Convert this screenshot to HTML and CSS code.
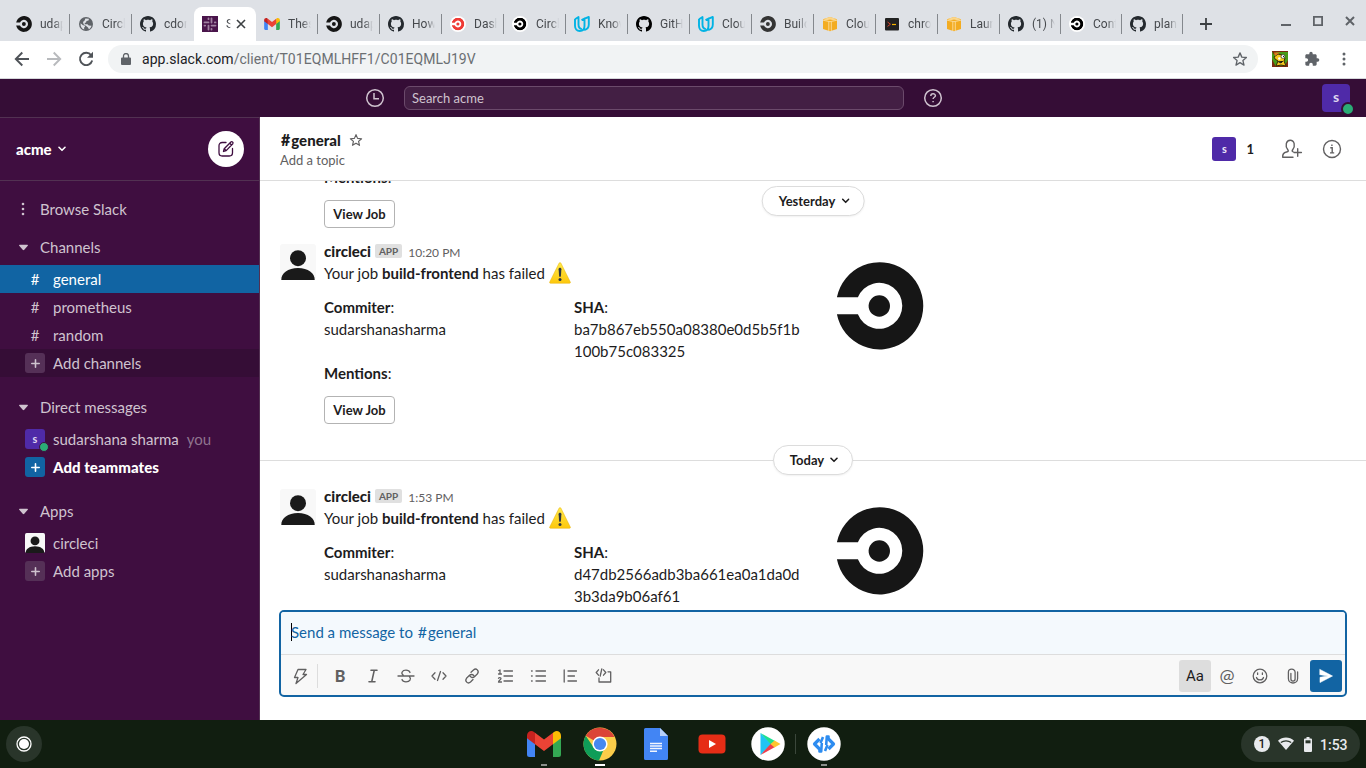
FILE: index.html
```html
<!DOCTYPE html>
<html lang="en">
<head>
<meta charset="utf-8">
<title>general | acme Slack</title>
<link rel="stylesheet" href="styles.css">
</head>
<body>
<svg class="defs" width="0" height="0">
  <defs>
    <symbol id="circle" viewBox="0 0 88 88">
      <path fill="currentColor" d="M.9 35.300A43.600 43.600 0 1 1 .9 52.300H21.900A23 23 0 1 0 21.900 35.300Z"/>
      <circle cx="43.300" cy="44" r="10.700" fill="currentColor"/>
    </symbol>
    <symbol id="github" viewBox="0 0 16 16"><path fill="currentColor" d="M8 0C3.58 0 0 3.58 0 8c0 3.54 2.29 6.53 5.47 7.59.4.07.55-.17.55-.38 0-.19-.01-.82-.01-1.49-2.01.37-2.53-.49-2.69-.94-.09-.23-.48-.94-.82-1.13-.28-.15-.68-.52-.01-.53.63-.01 1.08.58 1.23.82.72 1.21 1.87.87 2.33.66.07-.52.28-.87.51-1.07-1.78-.2-3.64-.89-3.64-3.95 0-.87.31-1.59.82-2.15-.08-.2-.36-1.02.08-2.12 0 0 .67-.21 2.2.82.64-.18 1.32-.27 2-.27s1.36.09 2 .27c1.53-1.04 2.2-.82 2.2-.82.44 1.1.16 1.92.08 2.12.51.56.82 1.27.82 2.15 0 3.07-1.87 3.75-3.65 3.95.29.25.54.73.54 1.48 0 1.07-.01 1.93-.01 2.2 0 .21.15.46.55.38A8.01 8.01 0 0 0 16 8c0-4.42-3.58-8-8-8z"/></symbol>
    <symbol id="globe" viewBox="0 0 16 16"><circle cx="8" cy="8" r="7" fill="#5f6368"/><path fill="#dee1e6" d="M2.600 7.200 5 9.300l1.800.3.2 1.200-1 1 .3 1.800C3.600 12.900 2.200 10.300 2.600 7.200ZM7.400 2.500l3.600.3-.5 1.600-2 .6-.5 1.600-1.400.3.400 1.300h2.500l1.200 1.400 2.800.2c-.5 1.800-1.500 2.900-2.600 3.500L10 11.500 8.200 10 5.600 8.200 5 6l1.600-1.500Z"/></symbol>
    <symbol id="gmail" viewBox="0 0 34 26">
      <path fill="#4285f4" d="M0 6h8v20H2.500A2.500 2.500 0 0 1 0 23.500Z"/><path fill="#34a853" d="M26 6h8v17.500a2.500 2.500 0 0 1-2.500 2.500H26Z"/>
      <path fill="#c5221f" d="M0 7V4.500C0 .8 4-1.200 7 .9L8 1.700v11.500L0 7.300Z"/><path fill="#fbbc04" d="M34 7V4.500C34 .8 30-1.200 27 .9l-1 .8v11.500l8-5.900Z"/>
      <path fill="#ea4335" d="M8 1.700 17 8.400l9-6.700v11.500L17 20l-9-6.800Z"/>
    </symbol>
    <symbol id="udacity" viewBox="0 0 16 16"><path fill="none" stroke="#02b3e4" stroke-width="1.900" stroke-linejoin="round" d="M1 3.200 4.500 1v7.500c0 2.600 1.200 4.200 3.300 4.700M1 3v6.800c0 3.500 2 5.200 4.700 5.200 2.800 0 4.800-1.700 4.800-5V2.600L14.800 1v7.500c0 3-1.600 4.900-4.500 5.500M7.500 4.200l3-1.600v6.200"/></symbol>
    <symbol id="aws" viewBox="0 0 16 16"><path fill="#f3ac22" d="M1 3.300 8 1l7 2.300v9.800L8 15.300l-7-2.200Z"/><path fill="#fbd68c" d="M1 3.300 8 1l7 2.300-3.700 1L8 3.600l-3.300.7Z"/><path fill="none" stroke="#fce3ad" stroke-width=".8" d="m1 4.200 7 1.500 7-1.500M6.800 5.600V15m2.500-9.300V15"/></symbol>
    <symbol id="star" viewBox="0 0 24 24"><path fill="none" stroke="currentColor" stroke-width="2" stroke-linejoin="round" d="m12 2.800 2.700 6.400 6.900.6-5.200 4.500 1.600 6.800-6-3.600-6 3.600 1.600-6.800-5.200-4.500 6.900-.6Z"/></symbol>
    <symbol id="chev" viewBox="0 0 8 6"><path fill="none" stroke="currentColor" stroke-width="1.600" stroke-linecap="round" stroke-linejoin="round" d="m1 1.300 3 3 3-3"/></symbol>
    <symbol id="tri" viewBox="0 0 8 6"><path fill="currentColor" d="M.6.5h6.800c.6 0 .7.500.4.900L4.700 5.100c-.4.500-1 .5-1.400 0L.2 1.400C-.1 1 0 .5.6.5Z"/></symbol>
    <symbol id="plus" viewBox="0 0 8 8"><path stroke="currentColor" stroke-width="1.400" stroke-linecap="round" d="M4 .7v6.600M.7 4h6.600"/></symbol>
    <symbol id="person" viewBox="0 0 36 36"><rect width="36" height="36" rx="3" fill="#f8f8f8"/><circle cx="18" cy="14.200" r="8" fill="#1a1a1a"/><path fill="#1a1a1a" d="M1.300 36C1 29 8 24 18 24s17 5 16.700 12Z"/></symbol>
    <symbol id="warn" viewBox="0 0 22 22"><defs><linearGradient id="wg" x2="0" y2="1"><stop stop-color="#ffe94a"/><stop offset="1" stop-color="#fdc70c"/></linearGradient></defs><path fill="url(#wg)" stroke="#e8b20b" stroke-width=".5" d="M10 1.300q1-1.600 2 0L21.300 20q.4 1.300-.8 1.300H1.500Q.3 21.300.7 20Z"/><path fill="#2f3640" d="M9.600 7.300c0-2 2.800-2 2.800 0l-.5 6.700c-.1 1.300-1.700 1.300-1.800 0Z"/><circle cx="11" cy="17.400" r="1.500" fill="#2f3640"/></symbol>
  </defs>
</svg>

<div class="screen">
  <div class="tabstrip">
    <div class="tab"><svg class="fav dark"><use href="#circle"/></svg><span class="tab-title">udapeople</span></div>
    <div class="tab"><svg class="fav"><use href="#globe"/></svg><span class="tab-title">CircleCI</span></div>
    <div class="tab nosep"><svg class="fav gh"><use href="#github"/></svg><span class="tab-title">cdond-c3</span></div>
    <div class="tab active">
      <svg class="fav" viewBox="0 0 16 16"><path fill="#4a154b" d="M0 0h16v16H0Z"/><path fill="none" stroke="#a081a1" stroke-width="1.800" stroke-linecap="round" d="M6.500 2.500v.7M2.500 6.400h4M9.500 2.500v4M12.800 6.400h.7M2.500 9.600h.7M6.500 9.600v3.900M9.500 9.600h4M9.500 12.800v.7"/></svg>
      <span class="tab-title short">Slack</span>
      <svg class="tab-close" viewBox="0 0 10 10"><path stroke="#3c4043" stroke-width="1.600" d="m1 1 8 8M9 1 1 9"/></svg>
    </div>
    <div class="tab"><svg class="fav mail"><use href="#gmail"/></svg><span class="tab-title">These are</span></div>
    <div class="tab"><svg class="fav dark"><use href="#circle"/></svg><span class="tab-title">udapeople</span></div>
    <div class="tab"><svg class="fav gh"><use href="#github"/></svg><span class="tab-title">How to</span></div>
    <div class="tab"><svg class="fav round red"><use href="#circle"/></svg><span class="tab-title">Dashboard</span></div>
    <div class="tab"><svg class="fav round"><use href="#circle"/></svg><span class="tab-title">Circle</span></div>
    <div class="tab"><svg class="fav"><use href="#udacity"/></svg><span class="tab-title">Know</span></div>
    <div class="tab"><svg class="fav"><use href="#github"/></svg><span class="tab-title">GitHub</span></div>
    <div class="tab"><svg class="fav"><use href="#udacity"/></svg><span class="tab-title">Cloud</span></div>
    <div class="tab"><svg class="fav grey"><use href="#circle"/></svg><span class="tab-title">Build</span></div>
    <div class="tab"><svg class="fav"><use href="#aws"/></svg><span class="tab-title">Cloud</span></div>
    <div class="tab"><svg class="fav" viewBox="0 0 16 16"><rect x="1" y="2" width="14" height="12.500" rx="1" fill="#222"/><path fill="none" stroke="#d5432c" d="m3.500 6 3 2.200-3 2.200"/><path stroke="#f4b400" stroke-width="1.200" d="M8 8.500h4"/></svg><span class="tab-title">chrome</span></div>
    <div class="tab"><svg class="fav"><use href="#aws"/></svg><span class="tab-title">Launch</span></div>
    <div class="tab slim"><svg class="fav gh"><use href="#github"/></svg><span class="tab-title">(1) New</span></div>
    <div class="tab slim"><svg class="fav round"><use href="#circle"/></svg><span class="tab-title">Configure</span></div>
    <div class="tab slim"><svg class="fav gh"><use href="#github"/></svg><span class="tab-title">planning</span></div>
    <svg class="newtab" viewBox="0 0 12 12"><path stroke="#3c4043" stroke-width="1.800" d="M6 0v12M0 6h12"/></svg>
    <div class="window-buttons">
      <svg width="10" height="14" viewBox="0 0 10 14"><path stroke="#5f6368" stroke-width="2" d="M0 11h10"/></svg>
      <svg width="10" height="10" viewBox="0 0 10 10"><path fill="none" stroke="#5f6368" stroke-width="1.800" d="M.9.9h8.200v8.200H.9Z"/></svg>
      <svg width="10" height="10" viewBox="0 0 10 10"><path stroke="#5f6368" stroke-width="2" d="m1 1 8 8M9 1 1 9"/></svg>
    </div>
  </div>

  <div class="toolbar">
    <svg class="nav-ico" viewBox="0 0 16 16"><path fill="none" stroke="#4f5358" stroke-width="1.900" d="M15 8H2M8.300 1.500 1.800 8l6.500 6.500"/></svg>
    <svg class="nav-ico" viewBox="0 0 16 16"><path fill="none" stroke="#b8babd" stroke-width="1.900" d="M1 8h13M7.700 1.500 14.200 8l-6.500 6.500"/></svg>
    <svg class="nav-ico" viewBox="0 0 16 16"><path fill="none" stroke="#4f5358" stroke-width="1.900" d="M13.200 4.200A6.200 6.200 0 1 0 14.200 9.500"/><path fill="#4f5358" d="M15 .8v6H9Z"/></svg>
    <div class="omnibox">
      <svg width="10" height="13" viewBox="0 0 10 13"><path fill="#5f6368" d="M1 4.500h8a1 1 0 0 1 1 1V11a1 1 0 0 1-1 1H1a1 1 0 0 1-1-1V5.500a1 1 0 0 1 1-1Z"/><path fill="none" stroke="#5f6368" stroke-width="1.300" d="M2.500 5V3a2.500 2.500 0 0 1 5 0v2"/></svg>
      <span class="url"><b>app.slack.com</b>/client/T01EQMLHFF1/C01EQMLJ19V</span>
      <svg class="bookmark" width="16" height="16"><use href="#star"/></svg>
    </div>
    <svg class="ext" viewBox="0 0 16 16"><path fill="#479b17" d="M0 0h16v16H0Z"/><path fill="#7b2b10" d="M0 0h16v1H0ZM0 15h16v1H0ZM0 0h5L2 4Zm0 16V8l4 8ZM16 9v7h-4Z"/><path fill="#f3c61c" stroke="#3a2a05" stroke-width="1" d="M2 6 6 3l4 1 3 3-1 3 2 5-5-1-5 1 2-5-3-2Z"/><circle cx="11" cy="5.500" r="1.900" fill="#fff" stroke="#222" stroke-width=".6"/><circle cx="7.300" cy="7.500" r="1.200" fill="#fff"/><path fill="#e07b1b" d="M2 1.500h6L3 5Z"/><path stroke="#222" d="m6 10.500 3 1.500 2-2M11 5.500h1"/></svg>
    <svg class="puzzle" viewBox="0 0 24 24"><path fill="#5f6368" d="M20.500 11H19V7c0-1.100-.9-2-2-2h-4V3.500a2.500 2.500 0 0 0-5 0V5H4c-1.100 0-2 .9-2 2v3.800h1.500a2.700 2.700 0 0 1 0 5.400H2V20c0 1.100.9 2 2 2h3.800v-1.500a2.700 2.700 0 0 1 5.400 0V22H17c1.100 0 2-.9 2-2v-4h1.500a2.500 2.500 0 0 0 0-5Z"/></svg>
    <svg class="kebab" viewBox="0 0 4 14"><g fill="#5f6368"><circle cx="2" cy="2" r="1.500"/><circle cx="2" cy="7" r="1.500"/><circle cx="2" cy="12" r="1.500"/></g></svg>
  </div>

  <div class="topnav">
    <svg class="ring" viewBox="0 0 20 20"><circle cx="10" cy="10" r="8.300"/><path d="M9 5v5.700h5"/></svg>
    <div class="search">Search acme</div>
    <div class="help"><svg class="ring" viewBox="0 0 20 20"><circle cx="10" cy="10" r="8.300"/><path d="M7.800 8c0-3 4.600-2.800 4.600-.3 0 1.500-2.300 1.600-2.300 3.300M10.100 12.900v1.400"/></svg></div>
    <div class="me">s<i class="presence"></i></div>
  </div>

  <div class="workspace">
    <div class="sidebar">
      <div class="team">
        <span class="team-name">acme</span><svg class="chev"><use href="#chev"/></svg>
        <div class="compose"><svg width="18" height="18" viewBox="0 0 18 18"><g fill="none" stroke="#3f0e40" stroke-width="1.300" stroke-linejoin="round" stroke-linecap="round"><path d="M9 2.500H5.200C3.200 2.500 2 3.700 2 5.700v7.100C2 14.800 3.200 16 5.200 16h7.100c2 0 3.200-1.200 3.200-3.200V8.500"/><path d="m6.500 11.500.7-2.800L13.900 2c1-1 2.800.6 1.900 1.700L9.200 10.600Zm.8-2.700 1.800 1.800M12.700 3.300l1.800 1.700"/></g></svg></div>
      </div>
      <div class="row head browse"><svg class="dots" viewBox="0 0 4 14"><g fill="currentColor"><circle cx="2" cy="2" r="1.300"/><circle cx="2" cy="7" r="1.300"/><circle cx="2" cy="12" r="1.300"/></g></svg><span>Browse Slack</span></div>
      <div class="row head first"><svg class="tri"><use href="#tri"/></svg><span>Channels</span></div>
      <div class="row selected"><span class="slot">#</span><span>general</span></div>
      <div class="row"><span class="slot">#</span><span>prometheus</span></div>
      <div class="row"><span class="slot">#</span><span>random</span></div>
      <div class="row hover"><span class="slot box"><svg class="plus"><use href="#plus"/></svg></span><span>Add channels</span></div>
      <div class="row head"><svg class="tri"><use href="#tri"/></svg><span>Direct messages</span></div>
      <div class="row"><span class="slot box user">s<i class="presence small"></i></span><span>sudarshana sharma</span><span class="you">you</span></div>
      <div class="row strong"><span class="slot box blue"><svg class="plus"><use href="#plus"/></svg></span><span>Add teammates</span></div>
      <div class="row head"><svg class="tri"><use href="#tri"/></svg><span>Apps</span></div>
      <div class="row"><svg class="slot"><use href="#person"/></svg><span>circleci</span></div>
      <div class="row"><span class="slot box"><svg class="plus"><use href="#plus"/></svg></span><span>Add apps</span></div>
    </div>

    <div class="main">
      <div class="channel-head">
        <div class="channel-info">
          <div class="channel-name"><span><span class="hash">#</span>general</span><svg width="14" height="14"><use href="#star"/></svg></div>
          <div class="topic">Add a topic</div>
        </div>
        <div class="member">s</div>
        <div class="count">1</div>
        <svg class="add-user" width="22" height="20" viewBox="0 0 22 20"><g fill="none" stroke="#616061" stroke-width="1.400" stroke-linecap="round" stroke-linejoin="round"><path d="M12 18.300H1.700c-.3-3 .8-4.600 3.800-5.300 2-.5 2.200-1.200 1.300-2.300C3.800 7 5 1.300 9.200 1.300c4.300 0 5.400 5.700 2.500 9.400-.7.900-.8 1.600.2 2M16.700 9.800v7.400M13 13.500h7.400"/></g></svg>
        <svg class="info" width="20" height="20" viewBox="0 0 20 20"><g fill="none" stroke="#616061" stroke-width="1.400"><circle cx="10" cy="10" r="8.500"/><path d="M8.300 8.700h1.900v5M8 13.900h4.200M9.900 5.400v1.500"/></g></svg>
      </div>

      <div class="messages">
        <div class="date-pill floating">Yesterday<svg class="chev"><use href="#chev"/></svg></div>
        <div class="tail">
          <b>Mentions</b>:
          <div><span class="job">View Job</span></div>
        </div>
        <div class="message">
          <svg class="avatar"><use href="#person"/></svg>
          <div class="body">
            <div class="meta"><b>circleci</b><span class="app">APP</span><span class="time">10:20 PM</span></div>
            <div class="text">Your job <b>build-frontend</b> has failed <svg class="emoji"><use href="#warn"/></svg></div>
            <div class="section">
              <div class="fields">
                <div><b>Commiter</b>:<br>sudarshanasharma</div>
                <div><b>SHA</b>:<br>ba7b867eb550a08380e0d5b5f1b<br>100b75c083325</div>
                <div><b>Mentions</b>:</div>
              </div>
              <svg class="logo"><use href="#circle"/></svg>
            </div>
            <span class="job">View Job</span>
          </div>
        </div>
        <div class="day"><div class="date-pill">Today<svg class="chev"><use href="#chev"/></svg></div></div>
        <div class="message">
          <svg class="avatar"><use href="#person"/></svg>
          <div class="body">
            <div class="meta"><b>circleci</b><span class="app">APP</span><span class="time">1:53 PM</span></div>
            <div class="text">Your job <b>build-frontend</b> has failed <svg class="emoji"><use href="#warn"/></svg></div>
            <div class="section">
              <div class="fields">
                <div><b>Commiter</b>:<br>sudarshanasharma</div>
                <div><b>SHA</b>:<br>d47db2566adb3ba661ea0a1da0d<br>3b3da9b06af61</div>
              </div>
              <svg class="logo"><use href="#circle"/></svg>
            </div>
          </div>
        </div>
      </div>

      <div class="composer">
        <div class="input"><i class="caret"></i><span>Send a message to <span class="hash">#</span>general</span></div>
        <div class="format">
          <svg viewBox="0 0 18 18"><path d="M7 2.500h8l-3 5h3.500L5 16.500l2-6H3.500Z"/></svg>
          <i class="bar"></i>
          <span class="glyph bold">B</span>
          <svg viewBox="0 0 18 18"><path stroke-width="1.600" d="M7 3.200h6M5 14.800h6M10.300 3.200 7.700 14.800"/></svg>
          <svg viewBox="0 0 18 18"><path d="M1 9h16M13 5.500C12.500 4 11 3.200 9 3.200c-4 0-5.300 3.300-2.800 4.800M5 12.500c.5 1.500 2 2.300 4 2.300 4 0 5.500-3 3.500-5"/></svg>
          <svg viewBox="0 0 18 18"><path d="M5 5.800 2 9l3 3.200M13 5.800 16 9l-3 3.200M10.500 4.500l-3 9"/></svg>
          <svg viewBox="0 0 18 18"><path d="M8 5.300 10.500 3c2.800-2.500 6 1 4 3.700l-3 3c-1.500 1.300-3.500 1-4.500-.5M10 12.500 7.500 15c-2.800 2.500-6-1-4-3.700l3-3C8 7 10 7.300 11 8.800"/></svg>
          <svg viewBox="0 0 18 18"><path d="M8 4h8.500M8 9h8.500M8 14h8.500M2.700 3.500 4 3v4M2.500 7h3M2.500 11.300c.5-1 2.500-1 2.500.2 0 1.200-2.300 2-2.500 3.500h3"/></svg>
          <svg viewBox="0 0 18 18"><path d="M7 4h9.500M7 9h9.500M7 14h9.500M2.500 4h.7M2.500 9h.7M2.500 14h.7"/></svg>
          <svg viewBox="0 0 18 18"><path d="M2.200 3v12M6 4h8.500M6 9h6.500M6 14h8.500"/></svg>
          <svg viewBox="0 0 18 18"><path d="M3.500 2.800 1.200 5.500l2.300 2.700M8.500 2.800l2.300 2.700-2.300 2.700M6.800 2 5.200 9M4 11v4h11.700V4.800H13"/></svg>
          <span class="spacer"></span>
          <span class="aa">Aa</span>
          <span class="glyph at">@</span>
          <svg class="smile" viewBox="0 0 18 18"><circle cx="9" cy="9" r="6.800"/><path d="M5.500 10.500c1 3.200 6 3.200 7 0M6.600 6v1.400M11.400 6v1.400"/></svg>
          <svg class="clip" viewBox="0 0 18 18"><path d="M6.900 6.500V12c0 2.800 4.200 2.800 4.200 0V5.200c0-4.100-6.700-4-6.700 0V11.500c0 6 9.200 6 9.200 0V5"/></svg>
          <span class="send"><svg viewBox="0 0 18 18"><path class="plane" d="M3 2.500 15.500 9 3 15.500V10.300L11 9 3 7.700Z"/></svg></span>
        </div>
      </div>
    </div>
  </div>

  <div class="shelf">
    <div class="launcher"><svg width="20" height="20" viewBox="0 0 20 20"><circle cx="10" cy="10" r="7" fill="none" stroke="#fff" stroke-width="1.300"/><circle cx="10" cy="10" r="5" fill="#fff"/></svg></div>
    <div class="apps">
      <div class="app-ico running"><svg width="34" height="26"><use href="#gmail"/></svg></div>
      <div class="app-ico running current"><svg width="34" height="34" viewBox="0 0 34 34"><circle cx="17" cy="17" r="16.500" fill="#fbcd4a"/><path fill="#db4437" d="M17 17 2.700 8.700A16.500 16.500 0 0 1 31.300 9.500L31 10H17Z"/><path fill="#0f9d58" d="m2.700 8.700 8.200 12L17 24l-3.500 9.200A16.500 16.500 0 0 1 2.700 8.700Z"/><path fill="#0f9d58" d="m12 22 8.500 1-4.500 10.500-3-.6Z"/><circle cx="17" cy="17" r="7.600" fill="#fff"/><circle cx="17" cy="17" r="6.100" fill="#4688f1"/></svg></div>
      <div class="app-ico"><svg width="24" height="32" viewBox="0 0 24 32"><path fill="#4285f4" d="M1.500 0H16l8 8v22.500a1.500 1.500 0 0 1-1.500 1.500h-21A1.500 1.500 0 0 1 0 30.500v-29A1.500 1.500 0 0 1 1.500 0Z"/><path fill="#b6d0fb" d="m16 0 8 8h-8Z"/><path stroke="#f1f5fe" stroke-width="1.500" d="M6 15.500h12M6 18h12M6 20.500h12M6 23.300h7"/></svg></div>
      <div class="app-ico"><svg width="28" height="20" viewBox="0 0 28 20"><rect x=".5" y=".5" width="27" height="19" rx="4" fill="#e62d16"/><path fill="#fff" d="m11 6 7 4-7 4Z"/></svg></div>
      <div class="app-ico"><svg width="34" height="34" viewBox="0 0 34 34"><circle cx="17" cy="17" r="16.700" fill="#fff"/><path fill="#1fc4f4" d="M9.500 6v22l11-11Z"/><path fill="#1ee08f" d="M9.500 6 24 14l-4 3.500Z"/><path fill="#f03e4d" d="M9.500 28 24 20l-4-3.500Z"/><path fill="#fec62e" d="m23.500 13.500 6 3.500-6 3.500-4-3.500Z"/></svg></div>
      <i class="shelf-sep"></i>
      <div class="app-ico running"><svg width="34" height="34" viewBox="0 0 34 34"><circle cx="17" cy="17" r="16.700" fill="#fff"/><path fill="none" stroke="#2d8cf0" stroke-width="3.200" stroke-linejoin="round" d="m12.500 12-5 5 5 5M21.500 12l5 5-5 5"/><path fill="none" stroke="#2d8cf0" stroke-width="2.600" stroke-linejoin="round" d="M12.500 21v3.500h1.700l.6-8.500M21.500 13V9.500h-1.700l-.6 8.500M13.500 16l2.500-6M20.500 18 18 24"/></svg></div>
    </div>
    <div class="status">
      <span class="badge">1</span>
      <svg width="16" height="14" viewBox="0 0 16 14"><path fill="#e8eaed" d="M0 3.700C4.500-.5 11.500-.5 16 3.700L8 13Z"/><path fill="none" stroke="#29352a" stroke-width="1.200" d="M2.800 5.500c3-2.300 7.400-2.300 10.400 0"/></svg>
      <svg class="battery" width="8" height="15" viewBox="0 0 8 15"><path fill="#e8eaed" d="M2.500 0h3v1.500H7a1 1 0 0 1 1 1V14a1 1 0 0 1-1 1H1a1 1 0 0 1-1-1V2.500a1 1 0 0 1 1-1h1.500Z"/><path fill="#29352a" d="M1.500 3.300h5v3h-5Z"/></svg>
      <span class="clock">1:53</span>
    </div>
  </div>
</div>
</body>
</html>
```
FILE: styles.css
```css
* { box-sizing: border-box; }
body { margin: 0; font-family: Lato, "Liberation Sans", sans-serif; overflow: hidden; }
svg { display: block; flex: none; }
.defs { position: absolute; }
.screen { width: 1366px; height: 768px; display: flex; flex-direction: column; background: #fff; overflow: hidden; }

/* browser tabs */
.tabstrip { height: 41px; flex: none; display: flex; background: #dee1e6; padding: 7px 0 0 8px; font-family: Roboto, sans-serif; font-size: 12px; color: #46494d; }
.tab { width: 62px; height: 34px; flex: none; display: flex; align-items: center; padding: 0 6px 0 8px; background: linear-gradient(#84888d, #84888d) no-repeat right 7px / 1px 20px; }
.tab.slim { width: 61px; }
.tab.nosep { background: none; }
.tab.active { background: #fff; border-radius: 8px 8px 0 0; }
.fav { width: 16px; height: 16px; color: #000; }
.fav.dark { color: #161616; }
.fav.gh { color: #24292e; }
.fav.grey { color: #343434; }
.fav.mail { height: 12px; }
.fav.round { background: #fff; border-radius: 50%; padding: 1.500px; }
.fav.red { color: #ef3b36; }
.tab-title { width: 23px; flex: none; margin-left: 8px; overflow: hidden; white-space: nowrap; line-height: 16px; -webkit-mask-image: linear-gradient(90deg, #000 62%, transparent); mask-image: linear-gradient(90deg, #000 62%, transparent); }
.tab-title.short { width: 5px; }
.tab-close { width: 10px; height: 10px; margin-left: 5px; }
.newtab { width: 12px; height: 12px; margin: 11px 0 0 17px; }
.window-buttons { margin: 7px 11px 0 auto; display: flex; gap: 22px; height: 14px; align-items: center; }

/* address bar */
.toolbar { height: 38px; flex: none; display: flex; align-items: center; padding: 0 20px 1px 14px; border-bottom: 1px solid #d5d7da; font-family: Roboto, sans-serif; }
.nav-ico { width: 16px; height: 16px; margin-right: 16px; }
.omnibox { width: 1150px; height: 28px; margin-left: -2px; padding: 0 10px 0 13px; border-radius: 14px; background: #f1f3f4; display: flex; align-items: center; }
.url { margin-left: 11px; font-size: 14px; color: #6b6f73; letter-spacing: .05px; }
.url b { font-weight: 400; color: #202124; }
.bookmark { margin-left: auto; color: #5f6368; }
.ext { width: 16px; height: 16px; margin-left: 14px; }
.puzzle { width: 16px; height: 16px; margin-left: 16px; }
.kebab { width: 4px; height: 14px; margin-left: auto; }

/* workspace top bar */
.topnav { height: 38px; flex: none; display: flex; align-items: center; padding: 0 16px 0 365px; background: #350d36; color: #cfc3cf; }
.ring { width: 20px; height: 20px; fill: none; stroke: #cfc3cf; stroke-width: 1.500; }
.search { width: 500px; height: 24px; margin-left: 19px; padding-left: 7px; border: 1px solid #6b4a6b; border-radius: 6px; background: #431f44; font-size: 13px; line-height: 22px; }
.help { margin-left: 19px; }
.me { position: relative; width: 28px; height: 28px; margin-left: auto; border-radius: 4px; background: #4f2aa8; color: #ded6f0; font-size: 14px; font-weight: 700; line-height: 26px; text-align: center; }
.presence { position: absolute; right: -5px; bottom: -4px; width: 14px; height: 14px; border: 2.500px solid #350d36; border-radius: 50%; background: #2bac76; }
.presence.small { right: -4px; bottom: -3px; width: 10px; height: 10px; border: 1.500px solid #3f0e40; }

.workspace { height: 603px; flex: none; display: flex; }

/* sidebar */
.sidebar { width: 260px; flex: none; background: #3f0e40; border-right: 1px solid #523152; color: #cfc3cf; font-size: 15px; }
.team { height: 64px; display: flex; align-items: center; padding: 0 15px 0 16px; border-top: 1px solid #523152; border-bottom: 1px solid #523152; color: #fff; }
.team-name { font-size: 15px; font-weight: 900; line-height: 18px; }
.chev { width: 8px; height: 6px; margin-left: 6px; }
.compose { width: 36px; height: 36px; margin-left: auto; border-radius: 50%; background: #fff; display: grid; place-items: center; }
.row { height: 28px; display: flex; align-items: center; padding-left: 25px; }
.row > span { line-height: 28px; white-space: nowrap; }
.row .slot { width: 20px; height: 20px; flex: none; margin-right: 8px; text-align: center; line-height: 20px; }
.row.head { padding-left: 19px; margin: 16px 0 4px; }
.row.browse { margin: 14px 0 0; padding-left: 21px; }
.row.first { margin: 10px 0 4px; }
.row.selected { background: #1164a3; color: #fff; }
.row.hover { background: #350d36; }
.row.strong { color: #fff; font-weight: 900; letter-spacing: .03px; }
.dots { width: 4px; height: 14px; margin-right: 15px; }
.tri { width: 9px; height: 7px; margin-right: 12px; }
.slot.box { border-radius: 3px; background: #553057; display: grid; place-items: center; position: relative; }
.slot.box.user { background: #4f2aa8; font-size: 11px; font-weight: 700; color: #ded6f0; }
.slot.box.blue { background: #1164a3; }
.plus { width: 9px; height: 9px; }
.you { margin-left: 8px; color: #8f748f; }

/* channel */
.main { flex: 1; display: flex; flex-direction: column; color: #1d1c1d; }
.channel-head { height: 64px; flex: none; display: flex; align-items: center; padding: 0 24px 0 20px; border-bottom: 1px solid #dddddd; }
.channel-info { margin-right: auto; padding-top: 2px; }
.channel-name { font-size: 15px; font-weight: 900; line-height: 20px; display: flex; align-items: center; gap: 8px; margin-left: 1px; }
.channel-name svg { color: #616061; }
.hash { font-size: 16px; line-height: 1; margin-right: 1px; }
.topic { font-size: 13px; line-height: 20px; color: #616061; }
.member { width: 24px; height: 24px; border-radius: 3px; background: #4f2aa8; color: #eee9f8; font-size: 11px; font-weight: 700; line-height: 23px; text-align: center; }
.count { margin-left: 10px; font-size: 13px; font-weight: 700; }
.add-user { margin-left: 27px; }
.info { margin-left: 19px; }

.messages { position: relative; height: 428px; flex: none; overflow: hidden; font-size: 15px; line-height: 22px; }
.messages b { font-weight: 700; }
.tail { margin: -15px 0 0 64px; }
.job { display: block; width: 71px; height: 28px; margin-top: 12px; border: 1px solid #b3b3b3; border-radius: 4px; font-size: 13px; font-weight: 700; line-height: 27px; text-align: center; }
.message { display: flex; padding: 12px 0 0 20px; }
.avatar { width: 36px; height: 36px; margin: 4px 8px 0 0; }
.body { flex: 1; }
.meta { height: 22px; display: flex; align-items: center; }
.meta b { font-weight: 900; }
.app { margin-left: 4px; padding: 0 4px; height: 14px; border-radius: 2px; background: #e0e0e0; color: #616061; font-size: 10px; font-weight: 700; line-height: 14px; }
.time { margin: 3px 0 0 6px; color: #616061; font-size: 12px; }
.text { height: 22px; display: flex; align-items: center; white-space: pre; }
.emoji { width: 22px; height: 22px; }
.section { display: flex; padding-top: 12px; }
.fields { width: 500px; display: grid; grid-template-columns: 250px 250px; }
.logo { width: 88px; height: 88px; margin: -34px 0 -30px 12px; color: #161616; }
.day { height: 30px; margin-top: 21px; display: flex; justify-content: center; background: linear-gradient(#ddd, #ddd) no-repeat 0 15px / 100% 1px; }
.day + .message { padding-top: 10px; }
.date-pill { height: 30px; padding: 0 14px 0 16px; border: 1px solid #dcdcdc; border-radius: 15px; background: #fff; box-shadow: 0 1px 2px rgba(0,0,0,.06); display: flex; align-items: center; font-size: 13px; font-weight: 700; line-height: 28px; }
.date-pill.floating { position: absolute; top: 5px; left: 50%; transform: translateX(-50%); }

/* composer */
.composer { height: 87px; flex: none; margin: 1px 19px 0; border: 2px solid #1264a3; border-radius: 5px; background: #f8f8f8; overflow: hidden; }
.input { height: 43px; padding: 0 0 2px 10px; display: flex; align-items: center; background: #f4f9fd; color: #1264a3; font-size: 15px; border-bottom: 1px solid #ddd; }
.input .hash { margin-left: 1px; }
.caret { width: 1px; height: 18px; margin-right: -1px; background: #000; }
.format { height: 42px; display: flex; align-items: center; padding: 0 3px 0 10px; }
.format svg { width: 18px; height: 18px; margin-right: 15px; fill: none; stroke: #616061; stroke-width: 1.300; stroke-linecap: round; stroke-linejoin: round; }
.format .bar { width: 1px; height: 24px; margin: 0 13px 0 -7px; background: #ddd; }
.glyph { width: 18px; margin: 0 14.500px 1px 0; text-align: center; color: #616061; font-weight: 900; font-size: 16px; }
.spacer { flex: 1; }
.aa { width: 32px; height: 32px; border-radius: 3px; background: #ddd; text-align: center; line-height: 33px; font-family: Roboto, sans-serif; font-size: 15px; }
.glyph.at { margin: 0 15px 3px 7px; font-weight: 400; font-size: 18px; }
.format .clip { margin-right: 8px; }
.send { width: 32px; height: 32px; border-radius: 3px; background: #1264a3; display: grid; place-items: center; }
.format .send svg { margin: 0; }
.format .plane { fill: #fff; stroke: #fff; stroke-width: .6; }

/* shelf */
.shelf { height: 48px; flex: none; display: flex; align-items: center; position: relative; background: #111e10; }
.launcher { width: 36px; height: 36px; margin-left: 6px; border-radius: 50%; background: #29352a; display: grid; place-items: center; }
.apps { display: flex; margin-left: 474px; height: 48px; align-items: center; }
.app-ico { width: 56px; height: 48px; display: grid; place-items: center; }
.app-ico.running { background: linear-gradient(#8b908b, #8b908b) no-repeat center 44px / 6px 2px; }
.app-ico.current { background: linear-gradient(#fff, #fff) no-repeat center 44px / 10px 2px; }
.shelf-sep { width: 1px; height: 20px; margin: 0 0 0 -1px; background: #3b473b; }
.status { width: 119px; height: 36px; margin: 0 6px 0 auto; border-radius: 18px; background: #29352a; display: flex; align-items: center; padding-left: 13px; font-family: Roboto, sans-serif; color: #e8eaed; }
.badge { width: 16px; height: 16px; margin-right: 8px; border-radius: 50%; background: #e8eaed; color: #222; font-size: 12px; font-weight: 500; line-height: 16px; text-align: center; }
.battery { margin-left: 10px; }
.clock { margin: 1px 0 0 8px; font-size: 14px; font-weight: 500; }
```
